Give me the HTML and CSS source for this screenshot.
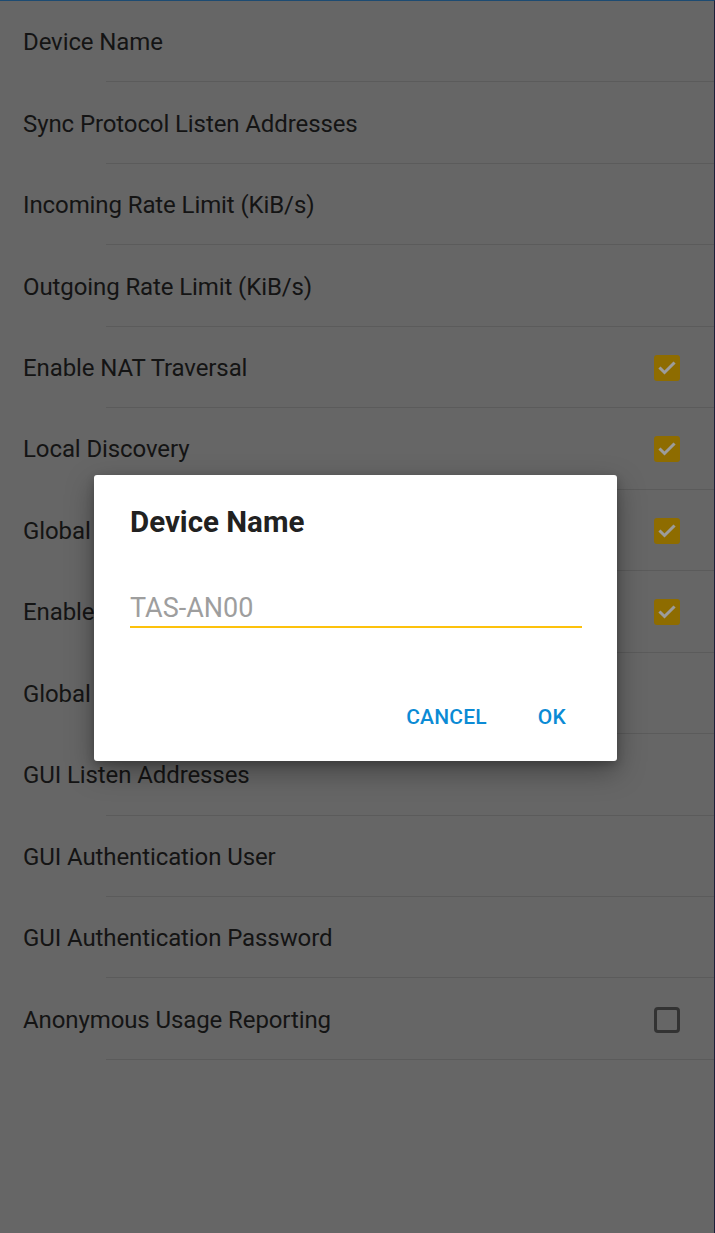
FILE: index.html
```html
<!DOCTYPE html>
<html>
<head>
<meta charset="utf-8">
<link rel="stylesheet" href="styles.css">
</head>
<body>
<div class="screen">
  <div class="list">
    <div class="row"><span class="label">Device Name</span></div>
    <div class="row"><span class="label">Sync Protocol Listen Addresses</span></div>
    <div class="row"><span class="label">Incoming Rate Limit (KiB/s)</span></div>
    <div class="row"><span class="label">Outgoing Rate Limit (KiB/s)</span></div>
    <div class="row"><span class="label">Enable NAT Traversal</span>
      <svg class="cb" viewBox="0 0 26 26"><rect x="0" y="0" width="26" height="26" rx="3" class="cb-fill"/><polyline points="6.5,13.5 10.5,17.5 19.5,8.5" class="cb-check"/></svg></div>
    <div class="row"><span class="label">Local Discovery</span>
      <svg class="cb" viewBox="0 0 26 26"><rect x="0" y="0" width="26" height="26" rx="3" class="cb-fill"/><polyline points="6.5,13.5 10.5,17.5 19.5,8.5" class="cb-check"/></svg></div>
    <div class="row"><span class="label">Global Discovery</span>
      <svg class="cb" viewBox="0 0 26 26"><rect x="0" y="0" width="26" height="26" rx="3" class="cb-fill"/><polyline points="6.5,13.5 10.5,17.5 19.5,8.5" class="cb-check"/></svg></div>
    <div class="row"><span class="label">Enable Relaying</span>
      <svg class="cb" viewBox="0 0 26 26"><rect x="0" y="0" width="26" height="26" rx="3" class="cb-fill"/><polyline points="6.5,13.5 10.5,17.5 19.5,8.5" class="cb-check"/></svg></div>
    <div class="row"><span class="label">Global Discovery Servers</span></div>
    <div class="row"><span class="label">GUI Listen Addresses</span></div>
    <div class="row"><span class="label">GUI Authentication User</span></div>
    <div class="row"><span class="label">GUI Authentication Password</span></div>
    <div class="row"><span class="label">Anonymous Usage Reporting</span>
      <svg class="cb" viewBox="0 0 26 26"><rect x="1.5" y="1.5" width="23" height="23" rx="2.5" class="cb-empty"/></svg></div>
  </div>

  <div class="dialog">
    <div class="dlg-title">Device Name</div>
    <div class="dlg-input">TAS-AN00</div>
    <div class="dlg-actions">
      <span class="dlg-btn">CANCEL</span>
      <span class="dlg-btn">OK</span>
    </div>
  </div>
</div>
</body>
</html>
```

FILE: styles.css
```css
html, body {
  margin: 0;
  padding: 0;
}
body {
  background: #666666;
  font-family: Roboto, "Noto Sans", sans-serif;
}
.screen {
  position: relative;
  width: 715px;
  height: 1233px;
  box-sizing: border-box;
  background: #666666;
  border-top: 1px solid #1d4b72;
  border-right: 1px solid #1c1f3a;
  overflow: hidden;
}
.list {
  display: flex;
  flex-direction: column;
}
.row {
  height: 81.46px;
  box-sizing: border-box;
  display: flex;
  align-items: center;
  justify-content: space-between;
  padding: 1px 34px 0 23px;
  position: relative;
}
.row::after {
  content: "";
  position: absolute;
  left: 106px;
  right: 0;
  bottom: 0;
  height: 1px;
  background: #5b5b5b;
}
.label {
  font-size: 24px;
  color: #141414;
  letter-spacing: -0.1px;
}
.cb {
  width: 26px;
  height: 26px;
  flex: none;
}
.cb-fill {
  fill: #8e6c00;
}
.cb-check {
  fill: none;
  stroke: #9c9c9c;
  stroke-width: 3;
  stroke-linecap: square;
}
.cb-empty {
  fill: none;
  stroke: #333333;
  stroke-width: 3;
}
.dialog {
  position: absolute;
  left: 94px;
  top: 474px;
  width: 523px;
  box-sizing: border-box;
  background: #ffffff;
  border-radius: 3px;
  box-shadow: 0 10px 28px rgba(0, 0, 0, 0.35), 0 3px 8px rgba(0, 0, 0, 0.2);
  padding: 30px 35px 23px 36px;
  display: flex;
  flex-direction: column;
}
.dlg-title {
  font-size: 29.5px;
  line-height: 34px;
  font-weight: 700;
  color: #212121;
}
.dlg-input {
  margin-top: 52px;
  font-size: 27px;
  line-height: 35px;
  color: #9e9e9e;
  border-bottom: 2.5px solid #fdc20c;
}
.dlg-actions {
  margin-top: 68px;
  display: flex;
  justify-content: flex-end;
  gap: 51px;
  padding-right: 16px;
}
.dlg-btn {
  font-size: 21px;
  line-height: 42px;
  font-weight: 500;
  color: #0b8bd5;
  letter-spacing: 0.2px;
}
```
